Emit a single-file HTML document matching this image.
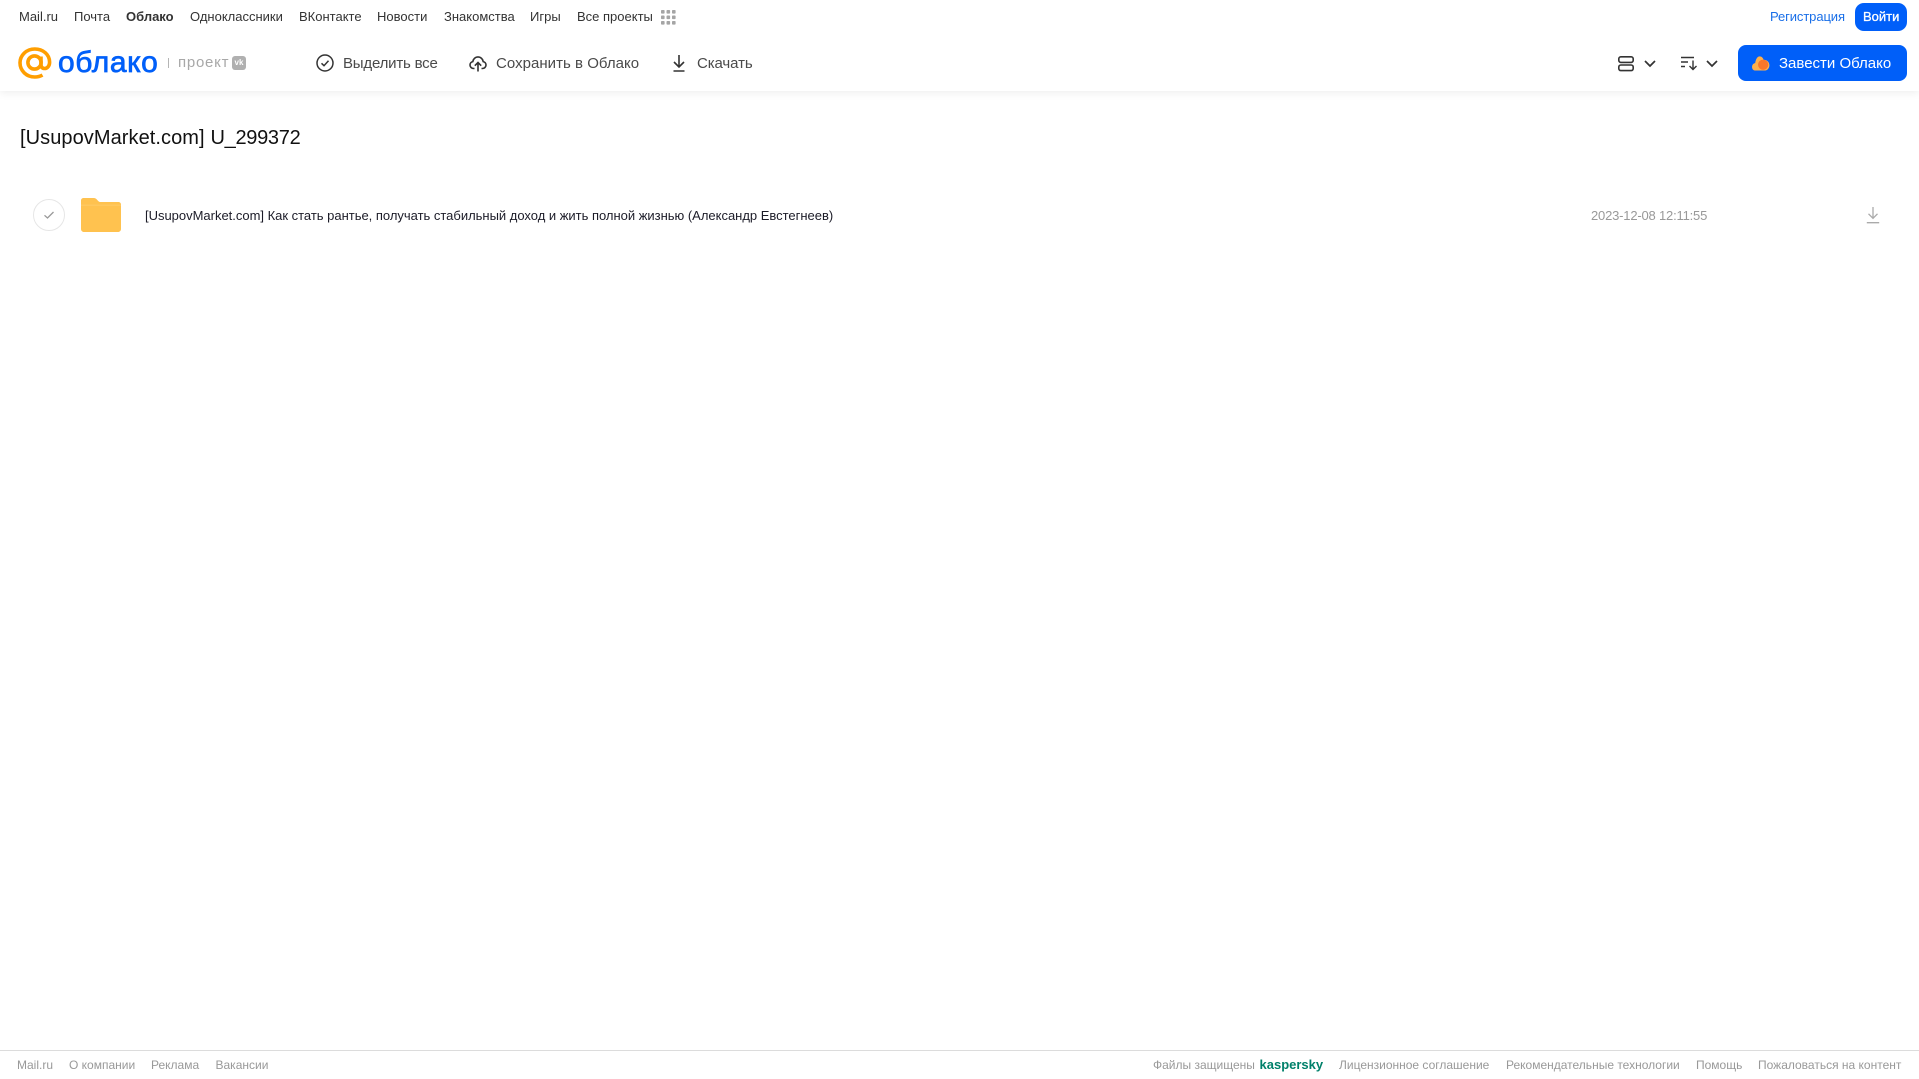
<!DOCTYPE html>
<html lang="ru"><head><meta charset="utf-8"><title>Облако</title>
<style>
html,body{margin:0;padding:0;background:#fff;width:1919px;height:1079px;overflow:hidden}
body{position:relative;font-family:"Liberation Sans",Arial,sans-serif}
.t{position:absolute;white-space:nowrap;line-height:16px}
.n{top:9px;font-size:13px;color:#333}
.b{top:56px;font-size:15px;color:#4a4a4a;line-height:16px}
.f{top:1057px;font-size:12px;color:#999}
svg{position:absolute;overflow:visible}
#hdr{position:absolute;left:0;top:0;width:1919px;height:91px;background:#fff;box-shadow:0 2px 8px rgba(0,0,0,.07)}
</style></head><body>
<div id="hdr"></div>
<span class="t n" style="left:19px">Mail.ru</span>
<span class="t n" style="left:74px">Почта</span>
<span class="t n" style="left:126px;font-weight:700">Облако</span>
<span class="t n" style="left:190px">Одноклассники</span>
<span class="t n" style="left:299px">ВКонтакте</span>
<span class="t n" style="left:377px">Новости</span>
<span class="t n" style="left:444px">Знакомства</span>
<span class="t n" style="left:530px">Игры</span>
<span class="t n" style="left:577px">Все проекты</span>
<svg style="left:661px;top:10px" width="15" height="15" fill="#a5a5a5"><rect x="0" y="0" width="3.6" height="3.6" rx=".8"/><rect x="5.5" y="0" width="3.6" height="3.6" rx=".8"/><rect x="11" y="0" width="3.6" height="3.6" rx=".8"/><rect x="0" y="5.5" width="3.6" height="3.6" rx=".8"/><rect x="5.5" y="5.5" width="3.6" height="3.6" rx=".8"/><rect x="11" y="5.5" width="3.6" height="3.6" rx=".8"/><rect x="0" y="11" width="3.6" height="3.6" rx=".8"/><rect x="5.5" y="11" width="3.6" height="3.6" rx=".8"/><rect x="11" y="11" width="3.6" height="3.6" rx=".8"/></svg>
<span class="t n" style="left:1770px;color:#1a6fe8;letter-spacing:-.1px">Регистрация</span>
<div style="position:absolute;left:1855px;top:3px;width:52px;height:28px;border-radius:9px;background:#005ff9"></div>
<span class="t n" style="left:1863px;color:#fff;-webkit-text-stroke:.3px #fff">Войти</span>
<!-- logo -->
<svg style="left:18px;top:47px" width="34" height="32" viewBox="0 0 34 32" fill="none" stroke="#ff9e00" stroke-width="3.6"><circle cx="16.5" cy="15.5" r="6.6"/><path d="M23 9.500v8c0 2.600 1.500 4 3.600 4 2.600 0 5-2.400 5-6.400C31.600 7.500 25 2 16.800 2 8.500 2 2 8.200 2 15.800 2 23.800 8.500 30 16.800 30c3 0 5.400-.6 7.700-1.900"/></svg>
<span class="t" style="left:58px;top:46px;line-height:34px;font-size:30px;color:#005ff9;font-weight:400;-webkit-text-stroke:.7px #005ff9;letter-spacing:.6px">облако</span>
<div style="position:absolute;left:168px;top:58px;width:1px;height:10px;background:#b5b5b5"></div>
<span class="t" style="left:178px;top:55px;font-size:15px;color:#a8a8a8;letter-spacing:.75px">проект</span>
<div style="position:absolute;left:232px;top:56px;width:14px;height:14px;border-radius:3px;background:#b0b0b0"></div>
<span class="t" style="left:232px;top:58px;width:14px;text-align:center;font-size:8px;line-height:10px;font-weight:700;color:#fff">vk</span>
<!-- toolbar -->
<svg style="left:316px;top:54px" width="18" height="18" viewBox="0 0 18 18" fill="none" stroke="#333" stroke-width="1.500"><circle cx="9" cy="9" r="8"/><path d="M5.500 9.300l2.500 2.400 4.500-5"/></svg>
<span class="t b" style="left:343px;letter-spacing:-.2px">Выделить все</span>
<svg style="left:469px;top:54px" width="18" height="18" viewBox="0 0 18 18" fill="none" stroke="#333" stroke-width="1.600"><path d="M5.500 14.500H4.600C2.600 14.500 1 13 1 11c0-1.700 1.200-3.100 2.800-3.400C4.200 4.900 6.400 2.900 9 2.900s4.800 2 5.200 4.700C15.800 7.900 17 9.300 17 11c0 2-1.600 3.500-3.600 3.500h-.9"/><path d="M9 17.500V9M5.800 11.700L9 8.500l3.200 3.200"/></svg>
<span class="t b" style="left:496px;letter-spacing:.03px">Сохранить в Облако</span>
<svg style="left:671px;top:54px" width="16" height="18" viewBox="0 0 16 18" fill="none" stroke="#333" stroke-width="1.600"><path d="M8 1v11.500M3 8l5 5 5-5M2.500 17h11"/></svg>
<span class="t b" style="left:697px;letter-spacing:-.1px">Скачать</span>
<!-- right controls -->
<svg style="left:1618px;top:55px" width="16" height="17" viewBox="0 0 16 17" fill="none" stroke="#333" stroke-width="1.600"><rect x=".8" y="1.800" width="14.400" height="5.600" rx="2"/><rect x=".8" y="10" width="14.400" height="5.600" rx="2"/></svg>
<svg style="left:1644px;top:60px" width="12" height="7" viewBox="0 0 12 7" fill="none" stroke="#333" stroke-width="1.700"><path d="M1 1l5 5 5-5"/></svg>
<svg style="left:1681px;top:55px" width="17" height="16" viewBox="0 0 17 16" fill="none" stroke="#333" stroke-width="1.400"><path d="M0 2.500h13M0 7h7M0 11.500h4M12 5.500v9M8.500 11l3.500 3.500 3.500-3.500"/></svg>
<svg style="left:1706px;top:60px" width="12" height="7" viewBox="0 0 12 7" fill="none" stroke="#333" stroke-width="1.700"><path d="M1 1l5 5 5-5"/></svg>
<div style="position:absolute;left:1738px;top:45px;width:169px;height:36px;border-radius:8px;background:#005ff9"></div>
<svg style="left:1751px;top:55px" width="19" height="16" viewBox="0 0 21 18"><path d="M5 17.500C2 17.500 1 15.500 1 13.500c0-2.500 1.500-4 3.500-4.300C5 5 7 1.500 9.500 1.500c2.500 0 4 2 4.500 4 3-.5 6.500 2 6.500 6 0 3.500-2.500 6-5.500 6z" fill="#ffb04a"/><circle cx="13.500" cy="11" r="5.800" fill="#f9772a"/></svg>
<span class="t b" style="left:1779px;color:#fff">Завести Облако</span>
<!-- title -->
<span class="t" style="left:20px;top:126px;line-height:24px;font-size:20px;color:#111;letter-spacing:.07px">[UsupovMarket.com]</span>
<span class="t" style="left:210.5px;top:126px;line-height:24px;font-size:20px;color:#111;letter-spacing:-.3px">U_299372</span>
<!-- row -->
<div style="position:absolute;left:33px;top:199px;width:30px;height:30px;border:1px solid #e6e6e6;border-radius:50%"></div>
<svg style="left:43px;top:210px" width="12" height="10" viewBox="0 0 12 10" fill="none" stroke="#999" stroke-width="1.300"><path d="M1.500 5.300l3 2.700 6-6"/></svg>
<svg style="left:81px;top:198px" width="40" height="34" viewBox="0 0 40 34"><path d="M2.500 0h10c2 0 3 1 4 2.200 1 1.200 1.800 1.800 3.500 1.800h17.500c1.400 0 2.500 1.100 2.500 2.500V31c0 1.700-1.300 3-3 3H3c-1.700 0-3-1.300-3-3V2.500C0 1.100 1.100 0 2.500 0z" fill="#ffc24f"/><path d="M0 6.500h40V8H0z" fill="#ffc85f"/></svg>
<span class="t" style="left:145px;top:208px;font-size:13px;color:#1c1c28;letter-spacing:-.012px">[UsupovMarket.com] Как стать рантье, получать стабильный доход и жить полной жизнью (Александр Евстегнеев)</span>
<span class="t" style="left:1591px;top:208px;font-size:13px;color:#999;letter-spacing:-.19px">2023-12-08 12:11:55</span>
<svg style="left:1866px;top:207px" width="14" height="17" viewBox="0 0 14 17" fill="none" stroke="#aaa" stroke-width="1.300"><path d="M7 0v11M2.500 6.800L7 11.300l4.500-4.500M.8 15.700h12.400"/></svg>
<!-- footer -->
<div style="position:absolute;left:0;top:1050px;width:1919px;height:1px;background:#dcdcdc"></div>
<span class="t f" style="left:17px">Mail.ru</span>
<span class="t f" style="left:69px">О компании</span>
<span class="t f" style="left:151px">Реклама</span>
<span class="t f" style="left:215.500px">Вакансии</span>
<span class="t f" style="left:1153px">Файлы защищены</span>
<span class="t f" style="left:1259.500px;font-size:13px;font-weight:700;color:#00806a">kaspersky</span>
<span class="t f" style="left:1339px">Лицензионное соглашение</span>
<span class="t f" style="left:1506px">Рекомендательные технологии</span>
<span class="t f" style="left:1696px">Помощь</span>
<span class="t f" style="left:1758px">Пожаловаться на контент</span>
</body></html>
